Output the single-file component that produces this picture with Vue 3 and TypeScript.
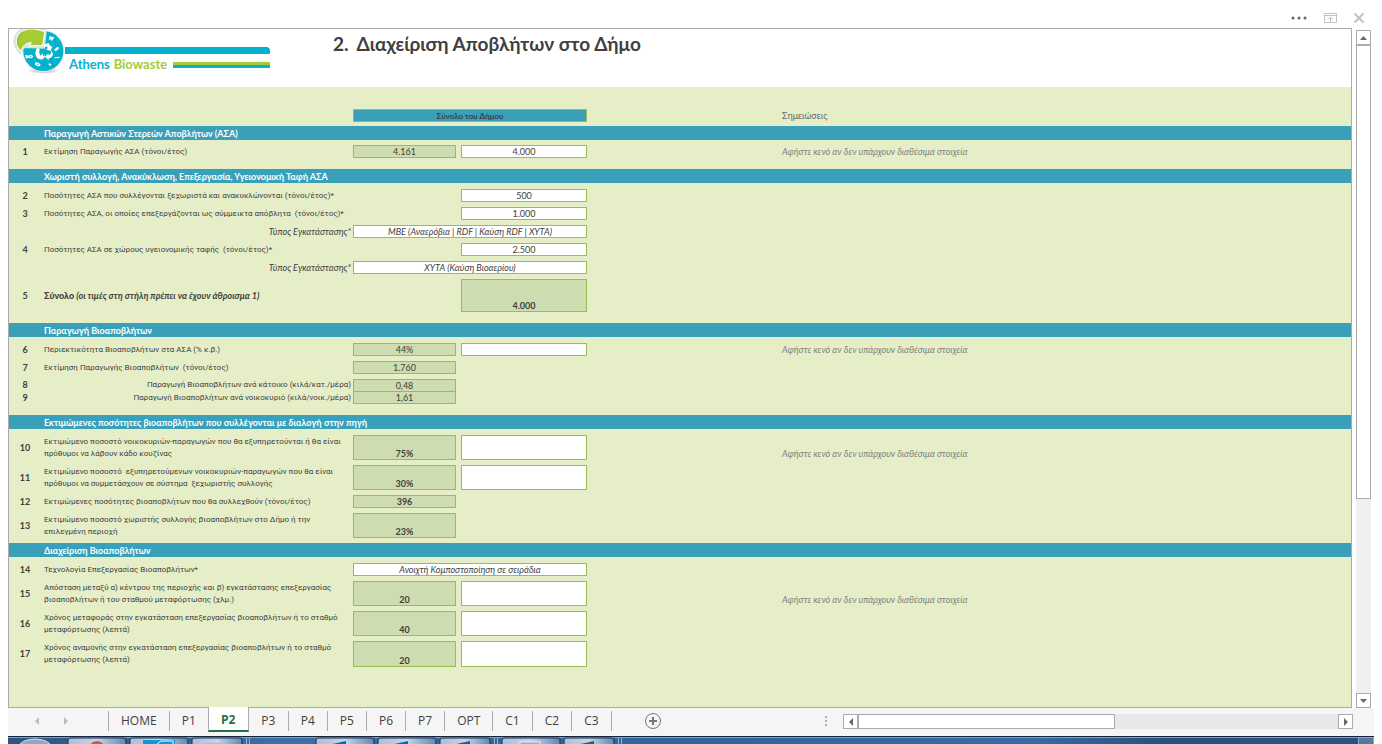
<script setup lang="ts">
import { ref } from 'vue'

interface Row {
  num?: number
  label: string
  labelStyle?: 'right' | 'right-italic' | 'total'
  size?: 'tall' | 'taller' | 'total' | 'joined'
  computed?: string
  computedBold?: boolean
  input?: string
  choice?: string
  sum?: string
  note?: boolean
}

interface Section {
  title: string
  compact?: boolean
  rows: Row[]
}

const noteText = 'Αφήστε κενό αν δεν υπάρχουν διαθέσιμα στοιχεία'

const sections = ref<Section[]>([
  {
    title: 'Παραγωγή Αστικών Στερεών Αποβλήτων (ΑΣΑ)',
    rows: [{ num: 1, label: 'Εκτίμηση Παραγωγής ΑΣΑ (τόνοι/έτος)', computed: '4.161', input: '4.000', note: true }],
  },
  {
    title: 'Χωριστή συλλογή, Ανακύκλωση, Επεξεργασία, Υγειονομική Ταφή ΑΣΑ',
    rows: [
      { num: 2, label: 'Ποσότητες ΑΣΑ που συλλέγονται ξεχωριστά και ανακυκλώνονται (τόνοι/έτος)*', input: '500' },
      { num: 3, label: 'Ποσότητες ΑΣΑ, οι οποίες επεξεργάζονται ως σύμμεικτα απόβλητα  (τόνοι/έτος)*', input: '1.000' },
      { label: 'Τύπος Εγκατάστασης*', labelStyle: 'right-italic', choice: 'ΜΒΕ (Αναερόβια | RDF | Καύση RDF | ΧΥΤΑ)' },
      { num: 4, label: 'Ποσότητες ΑΣΑ σε χώρους υγειονομικής ταφής  (τόνοι/έτος)*', input: '2.500' },
      { label: 'Τύπος Εγκατάστασης*', labelStyle: 'right-italic', choice: 'ΧΥΤΑ (Καύση Βιοαερίου)' },
      { num: 5, label: '(οι τιμές στη στήλη πρέπει να έχουν άθροισμα 1)', labelStyle: 'total', size: 'total', sum: '4.000' },
    ],
  },
  {
    title: 'Παραγωγή Βιοαποβλήτων',
    rows: [
      { num: 6, label: 'Περιεκτικότητα Βιοαποβλήτων στα ΑΣΑ (% κ.β.)', computed: '44%', input: '', note: true },
      { num: 7, label: 'Εκτίμηση Παραγωγής Βιοαποβλήτων  (τόνοι/έτος)', computed: '1.760' },
      { num: 8, label: 'Παραγωγή Βιοαποβλήτων ανά κάτοικο (κιλά/κατ./μέρα)', labelStyle: 'right', size: 'joined', computed: '0,48' },
      { num: 9, label: 'Παραγωγή Βιοαποβλήτων ανά νοικοκυριό (κιλά/νοικ./μέρα)', labelStyle: 'right', computed: '1,61' },
    ],
  },
  {
    title: 'Εκτιμώμενες ποσότητες βιοαποβλήτων που συλλέγονται με διαλογή στην πηγή',
    compact: true,
    rows: [
      { num: 10, label: 'Εκτιμώμενο ποσοστό νοικοκυριών-παραγωγών που θα εξυπηρετούνται ή θα είναι\nπρόθυμοι να λάβουν κάδο κουζίνας', size: 'tall', computed: '75%', computedBold: true, input: '', note: true },
      { num: 11, label: 'Εκτιμώμενο ποσοστό  εξυπηρετούμενων νοικοκυριών-παραγωγών που θα είναι\nπρόθυμοι να συμμετάσχουν σε σύστημα  ξεχωριστής συλλογής', size: 'tall', computed: '30%', computedBold: true, input: '' },
      { num: 12, label: 'Εκτιμώμενες ποσότητες βιοαποβλήτων που θα συλλεχθούν (τόνοι/έτος)', computed: '396', computedBold: true },
      { num: 13, label: 'Εκτιμώμενο ποσοστό χωριστής συλλογής βιοαποβλήτων στο Δήμο ή την\nεπιλεγμένη περιοχή', size: 'tall', computed: '23%', computedBold: true },
    ],
  },
  {
    title: 'Διαχείριση Βιοαποβλήτων',
    rows: [
      { num: 14, label: 'Τεχνολογία Επεξεργασίας Βιοαποβλήτων*', choice: 'Ανοιχτή Κομποστοποίηση σε σειράδια' },
      { num: 15, label: 'Απόσταση μεταξύ α) κέντρου της περιοχής και β) εγκατάστασης επεξεργασίας\nβιοαποβλήτων ή του σταθμού μεταφόρτωσης (χλμ.)', size: 'tall', computed: '20', computedBold: true, input: '', note: true },
      { num: 16, label: 'Χρόνος μεταφοράς στην εγκατάσταση επεξεργασίας βιοαποβλήτων ή το σταθμό\nμεταφόρτωσης (λεπτά)', size: 'tall', computed: '40', computedBold: true, input: '' },
      { num: 17, label: 'Χρόνος αναμονής στην εγκατάσταση επεξεργασίας βιοαποβλήτων ή το σταθμό\nμεταφόρτωσης (λεπτά)', size: 'taller', computed: '20', computedBold: true, input: '' },
    ],
  },
])

const tabs = ['HOME', 'P1', 'P2', 'P3', 'P4', 'P5', 'P6', 'P7', 'OPT', 'C1', 'C2', 'C3']
const activeTab = ref('P2')

const taskButtons = [
  { x: 60, w: 58, kind: 'chrome' },
  { x: 122, w: 58, kind: 'outlook' },
  { x: 184, w: 50, kind: 'folder' },
  { x: 308, w: 58, kind: 'blue' },
  { x: 370, w: 58, kind: 'blue' },
  { x: 432, w: 50, kind: 'word' },
  { x: 494, w: 58, kind: 'calc' },
  { x: 556, w: 50, kind: 'excel' },
]
const iconColor: Record<string, string> = { blue: '#0a66c2', word: '#2a5699', excel: '#1e7145' }
</script>

<template>
  <div class="window">
    <div class="window-bar">
      <button type="button" aria-label="Περισσότερα">
        <svg width="16" height="4" viewBox="0 0 16 4"><g fill="#666"><circle cx="2" cy="2" r="1.5" /><circle cx="8" cy="2" r="1.5" /><circle cx="14" cy="2" r="1.5" /></g></svg>
      </button>
      <button type="button" aria-label="Επαναφορά">
        <svg width="13" height="10" viewBox="0 0 13 10" fill="none" stroke="#c3c3c3"><path d="M.5 .5h12v9H.5zM0 2.5h13M6.5 9V4.500M4 6.500L6.500 4L9 6.500" /></svg>
      </button>
      <button type="button" aria-label="Κλείσιμο">
        <svg width="10" height="10" viewBox="0 0 10 10" fill="none" stroke="#c3c3c3" stroke-width="2"><path d="M.5 .5L9.500 9.500M9.500 .5L.5 9.500" /></svg>
      </button>
    </div>

    <div class="body">
      <main class="sheet">
        <header class="sheet-head">
          <svg class="logo" width="262" height="50" viewBox="0 0 262 50" role="img" aria-label="Athens Biowaste">
            <defs>
              <radialGradient id="shade"><stop offset="0" stop-color="#000" stop-opacity=".35" /><stop offset="1" stop-color="#000" stop-opacity="0" /></radialGradient>
            </defs>
            <g transform="scale(.3333) translate(-27 -87)">
              <ellipse cx="130" cy="212" rx="50" ry="10" fill="url(#shade)" />
              <circle cx="130" cy="153" r="63" fill="#e4e9ea" />
              <circle cx="130" cy="153" r="60" fill="#05b1cb" />
              <path d="M60 158C32 128 42 84 94 84c16 0 28 4 35 7l8-5-6 56-50-2 8-9c-14 2-24 12-29 27z" fill="#dfe3e0" stroke="#dfe3e0" stroke-width="8" />
              <path d="M62 154C38 126 48 88 94 87c16 0 27 4 35 7l6-3-7 46-40 0 6-9c-16 0-26 10-32 26z" fill="#a5cc35" stroke="#fff" stroke-width="3" />
              <path d="M56 140c-6-16-2-32 12-42" fill="none" stroke="#8fb52b" stroke-width="3" />
              <g fill="#fff">
                <path d="M112 143l8 5c-4 7-3 13 2 19l6-7c3 9 1 16-7 18-14-2-20-21-9-35z" />
                <path d="M130 134l15-5 8 11 5-2-6 15-14-5 6-4-5-5-6 4z" />
                <path d="M154 151l5 11c-1 8-6 12-13 13l1 6-12-10 10-11 1 6c6-1 8-7 8-15z" />
                <path d="M122 180c3-9 8-13 14-15-1 8-6 13-14 15z" />
                <path d="M148 109l15 3c-2 5-5 9-9 12l-1-6-6 2z" />
                <ellipse cx="170" cy="147" rx="8" ry="4" transform="rotate(-38 170 147)" />
                <path d="M163 172l15-2 1 4-15 1z" />
                <path d="M146 190l8 2-1 5-7-1z" />
                <ellipse cx="113" cy="193" rx="9" ry="5" transform="rotate(20 113 193)" />
                <path d="M76 164l10 3c4-4 11-4 13 2 0 6-7 8-12 4l-10 3z" />
              </g>
              <g fill="#05b1cb"><circle cx="92" cy="170" r="2" /><circle cx="113" cy="193" r="2" /></g>
              <path d="M195 141h607q7 2 8 9v12H195z" fill="#05b1cb" />
              <path d="M519 186h291v9H519z" fill="#a5cc35" />
              <path d="M519 195h291v9H519z" fill="#05b1cb" />
            </g>
            <text class="logo-text" x="60" y="40"><tspan fill="#05b1cb">Athens</tspan><tspan fill="#a5cc35" dx="4">Biowaste</tspan></text>
          </svg>
          <h1><span>2.</span><span>Διαχείριση Αποβλήτων στο Δήμο</span></h1>
        </header>

        <table>
          <colgroup>
            <col class="c-num" /><col class="c-label" /><col class="c-a" /><col class="c-gap" /><col class="c-b" /><col class="c-space" /><col />
          </colgroup>
          <thead>
            <tr>
              <td></td><td></td>
              <th colspan="3" scope="col"><div class="col-head">Σύνολο του Δήμου</div></th>
              <td></td>
              <th scope="col" class="notes-head">Σημειώσεις</th>
            </tr>
          </thead>
          <tbody v-for="(section, s) in sections" :key="s" :class="{ compact: section.compact }">
            <tr class="band">
              <td></td>
              <th colspan="6" scope="rowgroup">{{ section.title }}</th>
            </tr>
            <tr v-for="(row, r) in section.rows" :key="r" :class="['row', row.size]">
              <td class="num">{{ row.num }}</td>
              <td class="label" :class="row.labelStyle">
                <label :for="`f-${s}-${r}`"><b v-if="row.labelStyle === 'total'">Σύνολο </b>{{ row.label }}</label>
              </td>
              <td v-if="row.choice" colspan="3">
                <select :id="`f-${s}-${r}`" class="box choice"><option>{{ row.choice }}</option></select>
              </td>
              <template v-else>
                <td>
                  <output v-if="row.computed" :id="row.input === undefined ? `f-${s}-${r}` : undefined" class="box calc" :class="{ bold: row.computedBold }">{{ row.computed }}</output>
                </td>
                <td></td>
                <td>
                  <output v-if="row.sum" :id="`f-${s}-${r}`" class="box calc bold">{{ row.sum }}</output>
                  <input v-else-if="row.input !== undefined" :id="`f-${s}-${r}`" v-model="row.input" class="box" type="text" />
                </td>
              </template>
              <td></td>
              <td class="note">{{ row.note ? noteText : '' }}</td>
            </tr>
          </tbody>
        </table>
      </main>

      <div class="vscroll">
        <button type="button" aria-label="Πάνω"><svg width="7" height="4"><path d="M0 4h7L3.500 0z" fill="#666" /></svg></button>
        <div class="track"><div class="thumb"></div></div>
        <button type="button" aria-label="Κάτω"><svg width="7" height="4"><path d="M0 0h7L3.500 4z" fill="#666" /></svg></button>
      </div>
    </div>

    <div class="strip">
      <div class="nav">
        <button type="button" aria-label="Προηγούμενο φύλλο"><svg width="4" height="8"><path d="M4 0v8L0 4z" fill="#bdbdbd" /></svg></button>
        <button type="button" aria-label="Επόμενο φύλλο"><svg width="4" height="8"><path d="M0 0v8l4-4z" fill="#bdbdbd" /></svg></button>
      </div>
      <nav class="tabs">
        <button v-for="tab in tabs" :key="tab" type="button" :class="{ active: tab === activeTab }" @click="activeTab = tab">{{ tab }}</button>
      </nav>
      <button class="add" type="button" aria-label="Νέο φύλλο">
        <svg width="16" height="16" viewBox="0 0 16 16" fill="none" stroke="#777"><circle cx="8" cy="8" r="7.500" /><path d="M8 4v8M4 8h8" stroke-width="2" /></svg>
      </button>
      <div class="grip"><i></i><i></i><i></i></div>
      <div class="hscroll">
        <button type="button" aria-label="Αριστερά"><svg width="4" height="8"><path d="M4 0v8L0 4z" fill="#666" /></svg></button>
        <div class="track"><div class="thumb"></div></div>
        <button type="button" aria-label="Δεξιά"><svg width="4" height="8"><path d="M0 0v8l4-4z" fill="#666" /></svg></button>
      </div>
    </div>

    <footer class="taskbar">
      <svg width="100%" height="8" aria-hidden="true">
        <defs>
          <linearGradient id="tb"><stop offset="0" stop-color="#a9bfda" /><stop offset=".5" stop-color="#c6d6e8" /><stop offset="1" stop-color="#5f87b5" /></linearGradient>
        </defs>
        <ellipse cx="27" cy="10" rx="16" ry="8" fill="#8fa9c4" stroke="#dbe5ef" />
        <g v-for="b in taskButtons" :key="b.x">
          <rect :x="b.x" y="1" :width="b.w" height="10" rx="2" fill="url(#tb)" stroke="#16304f" />
          <circle v-if="b.kind === 'chrome'" :cx="b.x + 29" cy="13" r="9" fill="#dd5144" />
          <g v-else-if="b.kind === 'outlook'"><rect :x="b.x + 13" y="3" width="32" height="6" fill="#0a9ad8" /><path :d="`M${b.x + 26} 8l5-4h12v4`" fill="none" stroke="#fff" /></g>
          <rect v-else-if="b.kind === 'folder'" :x="b.x + 11" y="6" width="18" height="4" rx="2" fill="#cdbb86" />
          <rect v-else-if="b.kind === 'calc'" :x="b.x + 18" y="5" width="20" height="6" fill="#8fb0d2" stroke="#e6eef6" />
          <path v-else :d="`M${b.x + 12} 8L${b.x + 30} 4v4z`" :fill="iconColor[b.kind]" />
        </g>
        <path d="M238.500 1v8M241.500 1v8M486.500 1v8M489.500 1v8M610.500 1v8M613.500 1v8" stroke="#8fb0d2" />
      </svg>
      <div class="show-desktop"></div>
    </footer>
  </div>
</template>

<style>
body {
  margin: 0;
  background: #fff;
}
</style>

<style scoped>
.window {
  box-sizing: border-box;
  min-height: 100vh;
  padding: 0 8px;
  display: flex;
  flex-direction: column;
  font-family: Lato, "Open Sans", "Noto Sans", sans-serif;
  font-size: 9px;
  line-height: 12px;
  color: #404040;
}
button {
  padding: 0;
  border: 0;
  background: none;
  display: flex;
  align-items: center;
  justify-content: center;
  color: inherit;
}
.window-bar {
  height: 28px;
  display: flex;
  justify-content: flex-end;
  align-items: center;
  gap: 17px;
  padding: 8px 10px 0 0;
  box-sizing: border-box;
}
.body {
  flex: 1;
  display: flex;
}
.sheet {
  flex: 1;
  min-width: 0;
  border: 1px solid #ababab;
  background: #e6eec8;
}
.sheet-head {
  display: flex;
  height: 58px;
  background: #fff;
}
.logo {
  flex: none;
}
.logo-text {
  font-family: Lato, "Open Sans", sans-serif;
  font-size: 13px;
  font-weight: 700;
}
h1 {
  margin: 3px 0 0 62px;
  display: flex;
  gap: 8px;
  font-size: 19px;
  line-height: 24px;
  font-weight: 700;
}
table {
  width: 100%;
  table-layout: fixed;
  border-collapse: collapse;
}
.c-num { width: 35px; }
.c-label { width: 309px; }
.c-a { width: 103px; }
.c-gap { width: 5px; }
.c-b { width: 126px; }
.c-space { width: 195px; }
td,
th {
  padding: 0;
  text-align: left;
  vertical-align: middle;
}
thead th {
  padding: 22px 0 4px;
}
.col-head {
  height: 13px;
  box-sizing: border-box;
  border: 1px solid #9bbb59;
  background: #3a9fb8;
  font-size: 8px;
  text-align: center;
}
thead .notes-head {
  font-weight: 400;
  color: #666;
}
.band th {
  height: 12px;
  padding-top: 2px;
  color: #fff;
}
.band td,
.band th {
  background: #3a9fb8;
}
.row td {
  height: 13px;
  padding: 0 0 5px;
}
.band + .row td {
  padding-top: 6px;
}
tbody:nth-of-type(1) .band + .row td {
  padding-top: 5px;
}
tbody:not(.compact) .row:last-child td {
  padding-bottom: 11px;
}
.row.joined td {
  height: 12px;
  padding-bottom: 0;
}
.row.tall td { height: 25px; }
.row.taller td { height: 26px; }
.row.total td { height: 33px; }
.row .num {
  padding-right: 3px;
  text-align: center;
  font-weight: 700;
}
.label label {
  display: block;
  font-family: Roboto, "Open Sans", sans-serif;
  font-size: 8px;
  white-space: pre;
}
.label.right-italic label,
.label.total label {
  font-family: inherit;
  font-size: 9px;
}
.right,
.right-italic {
  text-align: right;
}
.row .right,
.row .right-italic {
  padding-right: 2px;
}
.right-italic {
  font-style: italic;
}
.label.total label {
  font-weight: 700;
  font-style: italic;
}
.total b {
  font-style: normal;
}
.box {
  box-sizing: border-box;
  display: flex;
  width: 100%;
  height: 13px;
  margin: 0;
  padding: 0;
  border: 1px solid #9bbb59;
  border-radius: 0;
  background: #fff;
  font: inherit;
  line-height: 11px;
  color: inherit;
  text-align: center;
}
.calc {
  align-items: flex-end;
  justify-content: center;
  background: #cdddb0;
}
.choice {
  appearance: none;
  font-style: italic;
  text-align-last: center;
}
.bold {
  font-weight: 700;
}
.tall .box { height: 25px; }
.taller .box { height: 26px; }
.total .box { height: 33px; }
.joined .box {
  height: 12px;
  border-bottom: 0;
}
.row .note {
  vertical-align: bottom;
  font-style: italic;
  color: #808080;
}
.vscroll {
  width: 15px;
  margin: 2px 3px 0 4px;
  display: flex;
  flex-direction: column;
}
.vscroll button,
.hscroll button {
  box-sizing: border-box;
  flex: none;
  width: 15px;
  height: 15px;
  border: 1px solid #ababab;
  background: #fff;
}
.track {
  flex: 1;
  background: #f0f0f0;
}
.thumb {
  box-sizing: border-box;
  border: 1px solid #ababab;
  background: #fff;
}
.vscroll .thumb {
  height: 70%;
}
.strip {
  height: 28px;
  display: flex;
  background: #f5f5f5;
}
.nav {
  width: 100px;
  display: flex;
  align-items: center;
  gap: 25px;
  padding: 0 0 3px 27px;
  box-sizing: border-box;
}
.tabs {
  display: flex;
  align-items: flex-start;
  font-family: "Open Sans", sans-serif;
}
.tabs button {
  box-sizing: border-box;
  height: 20px;
  min-width: 39px;
  margin-top: 3px;
  padding: 0 12px;
  border-left: 1px solid #ababab;
  font-family: inherit;
  font-size: 12px;
  line-height: 20px;
}
.tabs button:last-child {
  border-right: 1px solid #ababab;
}
.tabs .active {
  height: 25px;
  min-width: 41px;
  margin-top: -1px;
  padding-top: 3px;
  border-right: 1px solid #ababab;
  border-bottom: 2px solid #217346;
  background: #fff;
  color: #217346;
  font-weight: 700;
}
.tabs .active + button {
  border-left: 0;
}
.add {
  align-self: flex-start;
  margin: 5px 0 0 33px;
}
.grip {
  margin: 8px 16px 0 auto;
  display: flex;
  flex-direction: column;
  gap: 2px;
}
.grip i {
  width: 2px;
  height: 2px;
  background: #b0b0b0;
}
.hscroll {
  width: 37.3%;
  height: 15px;
  margin: 6px 21px 0 0;
  display: flex;
}
.hscroll .track {
  background: #e8e8e8;
}
.hscroll .thumb {
  width: 53.5%;
  height: 15px;
}
.taskbar {
  box-sizing: border-box;
  height: 8px;
  display: flex;
  border-top: 1px solid #16233a;
  background: linear-gradient(90deg, #2b5680, #3a70a8 20%, #2e649c 50%, #336ca6 75%, #27507c 85%, #2a5380);
  box-shadow: inset 0 1px #7f9fc4;
  overflow: hidden;
}
.taskbar svg {
  flex: 1;
  min-width: 0;
}
.show-desktop {
  width: 14px;
  border: 1px solid #8fa9c4;
  border-bottom: 0;
  background: #56789c;
}
</style>
